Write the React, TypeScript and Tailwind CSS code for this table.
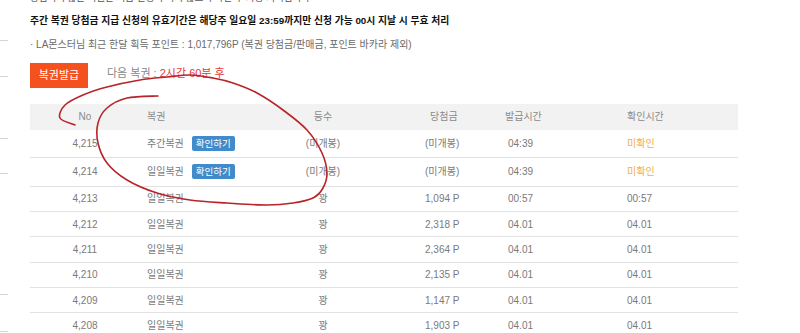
import React from "react";

const FONT = '"Liberation Sans", "Noto Sans CJK KR", sans-serif';

type Row = {
  no: string;
  kind: string;
  btn?: boolean;
  rank: string;
  prize: string;
  issued: string;
  checked: string;
  pending?: boolean;
};

const rows: Row[] = [
  { no: "4,215", kind: "주간복권", btn: true, rank: "(미개봉)", prize: "(미개봉)", issued: "04:39", checked: "미확인", pending: true },
  { no: "4,214", kind: "일일복권", btn: true, rank: "(미개봉)", prize: "(미개봉)", issued: "04:39", checked: "미확인", pending: true },
  { no: "4,213", kind: "일일복권", rank: "꽝", prize: "1,094 P", issued: "00:57", checked: "00:57" },
  { no: "4,212", kind: "일일복권", rank: "꽝", prize: "2,318 P", issued: "04.01", checked: "04.01" },
  { no: "4,211", kind: "일일복권", rank: "꽝", prize: "2,364 P", issued: "04.01", checked: "04.01" },
  { no: "4,210", kind: "일일복권", rank: "꽝", prize: "2,135 P", issued: "04.01", checked: "04.01" },
  { no: "4,209", kind: "일일복권", rank: "꽝", prize: "1,147 P", issued: "04.01", checked: "04.01" },
  { no: "4,208", kind: "일일복권", rank: "꽝", prize: "1,903 P", issued: "04.01", checked: "04.01" },
];

const pts: [number, number][] = [
  [75, 125], [60, 118], [65, 105], [83, 95], [107, 87], [140, 80], [167, 77], [190, 75],
  [213, 78], [233, 83], [257, 93], [283, 110], [307, 130], [322, 153], [327, 173], [323, 188],
  [313, 198], [293, 203], [267, 205], [227, 203], [190, 200], [157, 193], [127, 180], [107, 163],
  [98, 143], [98, 123], [107, 108], [127, 98], [158, 96],
];

function smoothPath(p: [number, number][]) {
  let d = `M${p[0][0]},${p[0][1]}`;
  for (let i = 0; i < p.length - 1; i++) {
    const p0 = p[i - 1] || p[i];
    const p1 = p[i];
    const p2 = p[i + 1];
    const p3 = p[i + 2] || p2;
    const c1x = p1[0] + (p2[0] - p0[0]) / 6;
    const c1y = p1[1] + (p2[1] - p0[1]) / 6;
    const c2x = p2[0] - (p3[0] - p1[0]) / 6;
    const c2y = p2[1] - (p3[1] - p1[1]) / 6;
    d += ` C${c1x.toFixed(1)},${c1y.toFixed(1)} ${c2x.toFixed(1)},${c2y.toFixed(1)} ${p2[0]},${p2[1]}`;
  }
  return d;
}

function Mark({ mt }: { mt: string }) {
  return <div className={`h-px w-[8px] shrink-0 bg-[#d4d4d4] ${mt}`} />;
}

export default function App() {
  return (
    <div
      className="relative w-[800px] h-[333px] overflow-hidden bg-white flex items-start"
      style={{ fontFamily: FONT }}
    >
      {/* left edge marks */}
      <div className="w-[30px] shrink-0 flex flex-col">
        <Mark mt="mt-[40px]" />
        <Mark mt="mt-[35px]" />
        <Mark mt="mt-[61px]" />
        <Mark mt="mt-[34px]" />
        <Mark mt="mt-[120px]" />
        <Mark mt="mt-[36px]" />
      </div>

      {/* main */}
      <div className="w-[708px] shrink-0">
        <div className="h-[5px] overflow-hidden">
          <div className="text-[9.5px] leading-[12px] mt-[-8px] text-[#555] whitespace-nowrap">
            당첨되지 않은 복권은 지급 신청이 되지 않으며 확인 후 자동 처리됩니다
          </div>
        </div>

        <div className="mt-[10px] h-[12px] leading-[12px] text-[9.8px] font-bold text-[#111] whitespace-nowrap">
          주간 복권 당첨금 지급 신청의 유효기간은 해당주 일요일 23:59까지만 신청 가능 00시 지날 시 무효 처리
        </div>

        <div className="mt-[12px] h-[12px] leading-[12px] text-[10px] text-[#6a6a6a] whitespace-nowrap">
          · LA몬스터님 최근 한달 획득 포인트 : 1,017,796P (복권 당첨금/판매금, 포인트 바카라 제외)
        </div>

        <div className="mt-[12px] flex items-start">
          <button className="w-[58px] h-[25px] bg-[#f4511e] text-white text-[11px] leading-[25px] text-center">
            복권발급
          </button>
          <div className="ml-[19px] h-[20px] leading-[20px] text-[11px] whitespace-nowrap">
            <span className="text-[#888]">다음 복권 : </span>
            <span className="text-[#e53935]">2시간 60분 후</span>
          </div>
        </div>

        {/* table */}
        <div className="mt-[16px] text-[10px]">
          <div className="grid grid-cols-[110px_130px_106px_124px_120px_118px] h-[25.5px] items-center bg-[#f2f2f2] text-[#8a8a8a]">
            <div className="text-center">No</div>
            <div className="pl-[7px]">복권</div>
            <div className="text-center">등수</div>
            <div className="pl-[54px]">당첨금</div>
            <div className="pl-[5px]">발급시간</div>
            <div className="pl-[7px]">확인시간</div>
          </div>
          {rows.map((r) => (
            <div
              key={r.no}
              className={`grid grid-cols-[110px_130px_106px_124px_120px_118px] items-center border-b border-[#e2e2e2] text-[#7a7a7a] ${
                r.btn ? "h-[28.5px]" : "h-[25.4px]"
              }`}
            >
              <div className="text-center">{r.no}</div>
              <div className="pl-[7px] flex items-center gap-[8px]">
                <span>{r.kind}</span>
                {r.btn && (
                  <span className="h-[15px] px-[4px] leading-[15px] rounded-[2px] bg-[#428bca] text-white text-[9.5px]">
                    확인하기
                  </span>
                )}
              </div>
              <div className="text-center">{r.rank}</div>
              <div className="pl-[49px]">{r.prize}</div>
              <div className="pl-[8px]">{r.issued}</div>
              <div className={`pl-[7px] ${r.pending ? "text-[#f0ad4e]" : ""}`}>{r.checked}</div>
            </div>
          ))}
        </div>
      </div>

      {/* hand-drawn annotation */}
      <svg
        className="absolute left-0 top-0 pointer-events-none"
        width="800"
        height="333"
        viewBox="0 0 800 333"
      >
        <path d={smoothPath(pts)} fill="none" stroke="#b7242a" strokeWidth="1.6" strokeLinecap="round" />
      </svg>
    </div>
  );
}
